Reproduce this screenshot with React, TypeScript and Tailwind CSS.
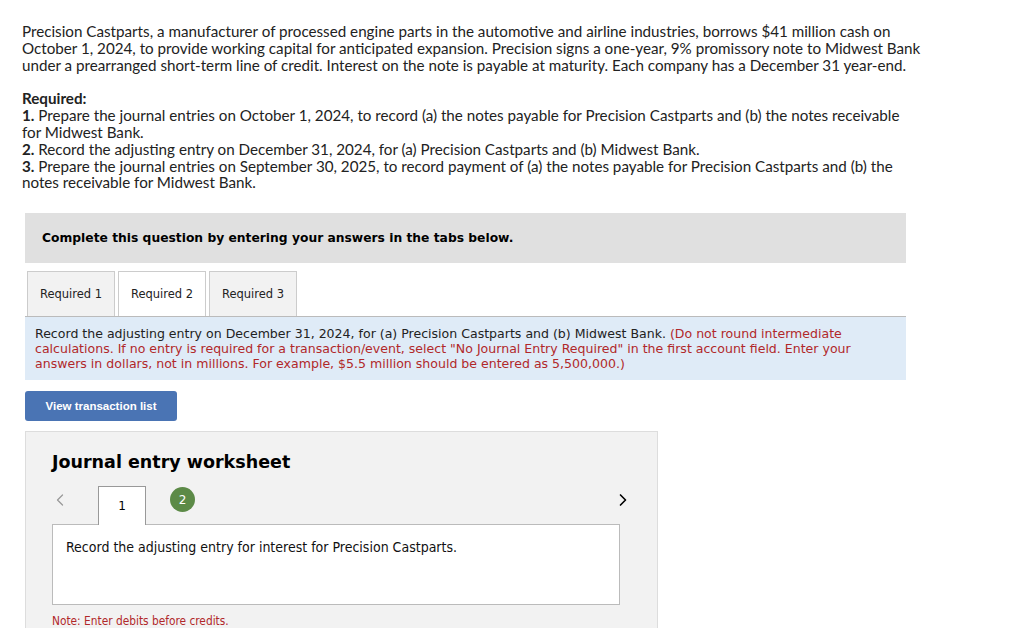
import { ChevronLeft, ChevronRight } from "lucide-react";

export default function App() {
  const tabs = ["Required 1", "Required 2", "Required 3"];
  const active = 1;

  return (
    <div className="min-h-screen bg-white text-[#222] pl-[22px] pt-[23px] pb-10">
      {/* enunciado */}
      <div className="w-[900px] font-['Lato',sans-serif] text-[15.2px] leading-[16.8px] text-[#222]">
        <p>
          Precision Castparts, a manufacturer of processed engine parts in the automotive and airline industries, borrows
          $41 million cash on October 1, 2024, to provide working capital for anticipated expansion. Precision signs a
          one-year, 9% promissory note to Midwest Bank under a prearranged short-term line of credit. Interest on the note
          is payable at maturity. Each company has a December 31 year-end.
        </p>
        <p className="font-bold mt-[17px]">Required:</p>
        <p>
          <b>1.</b> Prepare the journal entries on October 1, 2024, to record (a) the notes payable for Precision
          Castparts and (b) the notes receivable for Midwest Bank.
        </p>
        <p>
          <b>2.</b> Record the adjusting entry on December 31, 2024, for (a) Precision Castparts and (b) Midwest Bank.
        </p>
        <p>
          <b>3.</b> Prepare the journal entries on September 30, 2025, to record payment of (a) the notes payable for
          Precision Castparts and (b) the notes receivable for Midwest Bank.
        </p>
      </div>

      <div className="ml-[3px] w-[881px] mt-[22px] font-['DejaVu_Sans',Verdana,sans-serif]">
        {/* caja gris */}
        <div className="bg-[#e0e0e0] h-[50px] flex items-center pl-[17px] text-[12.3px] font-bold text-black">
          Complete this question by entering your answers in the tabs below.
        </div>

        {/* pestañas */}
        <div className="flex gap-[3px] mt-[8px] pl-[2px]">
          {tabs.map((t, i) => (
            <div
              key={t}
              className={`h-[45px] w-[88px] flex items-center justify-center text-[11.5px] text-[#222] border border-b-0 ${
                i === active ? "bg-white border-[#ccc]" : "bg-[#f2f2f2] border-[#ccc]"
              }`}
            >
              {t}
            </div>
          ))}
        </div>

        {/* instrucciones */}
        <div className="bg-[#dfebf7] border-t border-[#bbb] px-[10px] pt-[9px] pb-[9px] text-[12.55px] leading-[15px] text-[#222]">
          Record the adjusting entry on December 31, 2024, for (a) Precision Castparts and (b) Midwest Bank.{" "}
          <span className="text-[#b1282a]">
            (Do not round intermediate calculations. If no entry is required for a transaction/event, select "No Journal
            Entry Required" in the first account field. Enter your answers in dollars, not in millions. For example, $5.5
            million should be entered as 5,500,000.)
          </span>
        </div>

        <button className="mt-[11px] w-[152px] h-[30px] rounded-[3px] bg-[#4a74b4] text-white text-[11.5px] font-bold font-['Liberation_Sans',Arial,sans-serif]">
          View transaction list
        </button>

        {/* hoja de asientos */}
        <div className="mt-[10px] w-[633px] bg-[#f2f2f2] border border-[#ddd] pl-[26px] pr-[37px] pt-[17px] pb-[20px]">
          <h2 className="text-[17.5px] font-bold text-black">Journal entry worksheet</h2>

          <div className="mt-[10px] flex items-end">
            <ChevronLeft className="w-[20px] h-[20px] text-[#999] mb-[14px] ml-[-2px]" strokeWidth={1.5} />
            <div className="ml-[28px] w-[48px] h-[39px] bg-white border border-b-0 border-[#999] flex items-center justify-center text-[12px] text-black relative top-[1px]">
              1
            </div>
            <div className="ml-[24px] mb-[12px] w-[25px] h-[25px] rounded-full bg-[#5c8a47] text-white text-[12px] flex items-center justify-center">
              2
            </div>
            <ChevronRight className="ml-auto w-[20px] h-[20px] text-black mb-[14px] mr-[-13px]" strokeWidth={2} />
          </div>

          <div className="bg-white border border-[#bbb] h-[81px] pl-[13px] pt-[12px] text-[14px] text-[#111] font-['DejaVu_Sans_Condensed',Tahoma,sans-serif]">
            Record the adjusting entry for interest for Precision Castparts.
          </div>

          <p className="mt-[8px] text-[11.8px] text-[#b1282a] font-['DejaVu_Sans_Condensed',Tahoma,sans-serif]">
            Note: Enter debits before credits.
          </p>
        </div>
      </div>
    </div>
  );
}
